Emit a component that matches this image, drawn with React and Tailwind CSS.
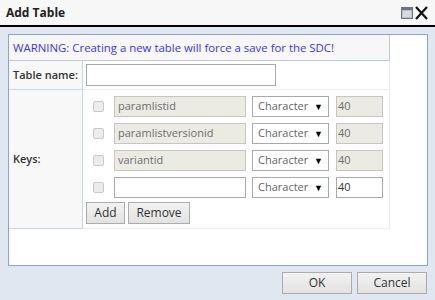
import React from "react";

const keys = [
  { name: "paramlistid", locked: true },
  { name: "paramlistversionid", locked: true },
  { name: "variantid", locked: true },
  { name: "", locked: false },
];

const KeyRow = ({ item }) => {
  const field = item.locked
    ? "bg-[#ebebe4] border-[#c6c6c0] text-[#6d6d6d]"
    : "bg-white border-[#a9a9a9] text-[#333]";
  return (
    <div className="flex items-center h-[21px] mb-[6px]">
      <span className="ml-[7px] w-[11px] h-[11px] rounded-[2px] border border-[#c9c9c9] bg-[#ececec]"></span>
      <div className={`ml-[10px] w-[132px] h-[21px] border px-[3px] flex items-center ${field}`}>
        {item.name}
      </div>
      <div className="ml-[6px] w-[77px] h-[21px] border border-[#a9a9a9] bg-white px-[5px] flex items-center justify-between text-[#666]">
        <span>Character</span>
        <span className="text-[9px] text-black">▼</span>
      </div>
      <div className={`ml-[7px] w-[47px] h-[21px] border px-[1px] flex items-center ${field}`}>
        40
      </div>
    </div>
  );
};

const App = () => {
  return (
    <div className="w-[435px] h-[300px] bg-[#e1e7f0] flex flex-col text-[11px] font-['Open_Sans',sans-serif] text-[#333]">
      {/* Title bar */}
      <div className="h-[27px] bg-[#f7f7f7] border-b-2 border-black flex items-center justify-between pl-[6px] pr-[6px]">
        <span className="text-[12px] font-bold text-[#222]">Add Table</span>
        <div className="flex items-center gap-[1px]">
          <svg width="12" height="12" viewBox="0 0 12 12">
            <rect x="0.5" y="0.5" width="11" height="11" fill="#b7c0cc" stroke="#6b7480" />
            <rect x="1" y="1" width="10" height="2" fill="#6b7480" />
            <rect x="2" y="4" width="8" height="6" fill="#d5dbe3" />
          </svg>
          <svg width="15" height="14" viewBox="0 0 15 14">
            <path d="M2 1 L13 13 M13 1 L2 13" stroke="#111" strokeWidth="2.2" />
          </svg>
        </div>
      </div>

      {/* Content panel */}
      <div className="mt-[7px] ml-[8px] mr-[7px] h-[232px] bg-white border border-[#88a6d4]">
        <div className="w-[381px]">
          <div className="h-[26px] bg-[#f7f7f7] border-b border-r border-[#bccbd6] flex items-center pl-[4px] text-[11.4px] text-[#3a35f0]">
            WARNING: Creating a new table will force a save for the SDC!
          </div>
          <div className="flex border-r border-[#ececec]">
            <div className="w-[74px] shrink-0 bg-[#f8f8f8] border-r border-[#c8d6e4] flex flex-col">
              <div className="h-[29px] flex items-center pl-[4px] font-semibold border-b border-[#c8d6e4]">
                Table name:
              </div>
              <div className="h-[139px] flex items-center pl-[4px] font-semibold border-b border-[#c8d6e4]">
                Keys:
              </div>
            </div>
            <div className="flex-1 flex flex-col">
              <div className="h-[29px] flex items-center pl-[3px] border-b border-[#ececec]">
                <div className="w-[190px] h-[22px] border border-[#a9a9a9] bg-white"></div>
              </div>
              <div className="h-[139px] pl-[3px] pt-[6px] border-b border-[#f0f0f0]">
                {keys.map((item, i) => (
                  <KeyRow key={i} item={item} />
                ))}
                <div className="flex gap-[3px] -mt-[2px]">
                  <button className="w-[39px] h-[22px] border border-[#acacac] bg-gradient-to-b from-[#f2f2f2] to-[#e2e2e2] text-[12px] text-[#333]">
                    Add
                  </button>
                  <button className="w-[62px] h-[22px] border border-[#acacac] bg-gradient-to-b from-[#f2f2f2] to-[#e2e2e2] text-[12px] text-[#333]">
                    Remove
                  </button>
                </div>
              </div>
            </div>
          </div>
        </div>
      </div>

      {/* Footer buttons */}
      <div className="flex justify-end gap-[5px] mt-[6px] mr-[8px]">
        <button className="w-[70px] h-[22px] border border-[#acacac] bg-gradient-to-b from-[#f2f2f2] to-[#e2e2e2] text-[12px] text-[#333]">
          OK
        </button>
        <button className="w-[70px] h-[22px] border border-[#acacac] bg-gradient-to-b from-[#f2f2f2] to-[#e2e2e2] text-[12px] text-[#333]">
          Cancel
        </button>
      </div>
    </div>
  );
};

export default App;
